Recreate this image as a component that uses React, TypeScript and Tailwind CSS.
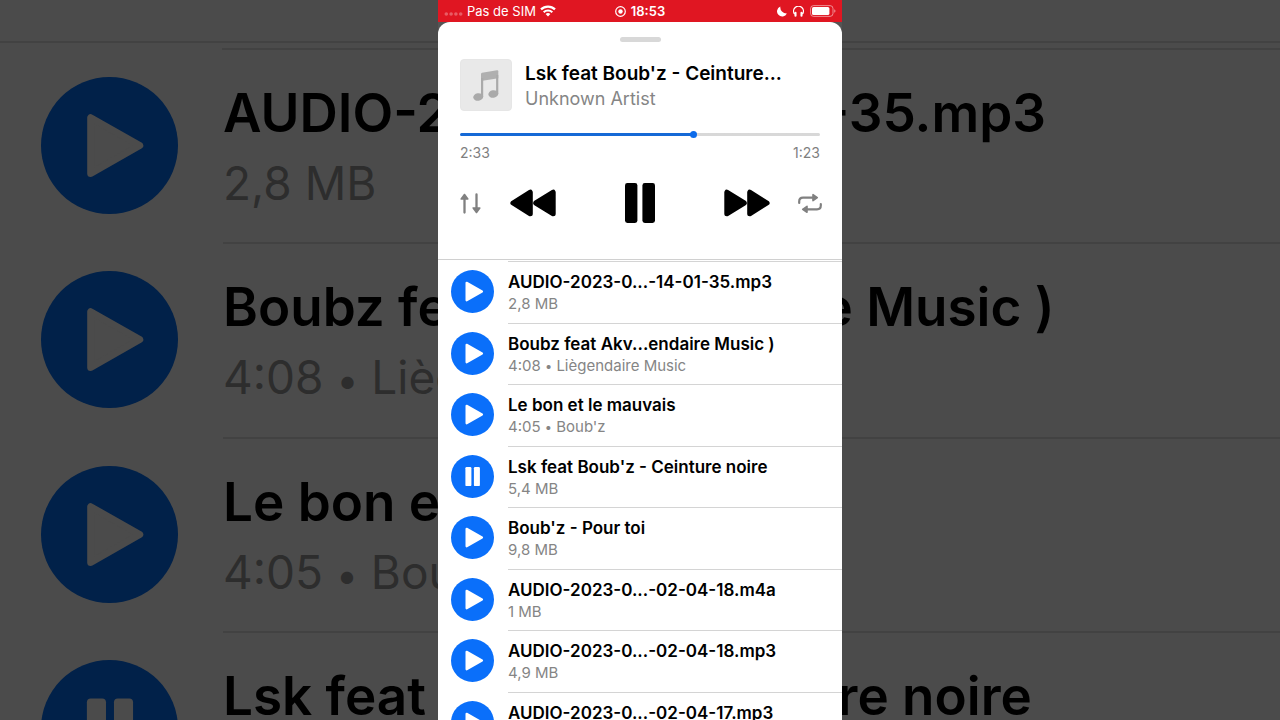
import React, { useState } from "react";

type Track = { title: string; detail: string; artist?: string };

const tracks: Track[] = [
  { title: "AUDIO-2023-0...-14-01-35.mp3", detail: "2,8 MB" },
  { title: "Boubz feat Akv...endaire Music )", detail: "4:08", artist: "Liègendaire Music" },
  { title: "Le bon et le mauvais", detail: "4:05", artist: "Boub'z" },
  { title: "Lsk feat Boub'z - Ceinture noire", detail: "5,4 MB" },
  { title: "Boub'z - Pour toi", detail: "9,8 MB" },
  { title: "AUDIO-2023-0...-02-04-18.m4a", detail: "1 MB" },
  { title: "AUDIO-2023-0...-02-04-18.mp3", detail: "4,9 MB" },
  { title: "AUDIO-2023-0...-02-04-17.mp3", detail: "4,9 MB" },
];

function Detail({ track }: { track: Track }) {
  return (
    <>
      {track.detail}
      {track.artist && (
        <>
          {" "}
          <span className="text-[0.85em]">•</span> {track.artist}
        </>
      )}
    </>
  );
}

function PlayDisc({ playing, className }: { playing: boolean; className: string }) {
  return (
    <svg viewBox="0 0 43 43" className={className} aria-hidden="true">
      <circle cx="21.5" cy="21.5" r="21.5" fill="currentColor" />
      {playing ? (
        <g className="fill-(--glyph)">
          <rect x="14.4" y="12.1" width="6" height="19" rx="1.2" />
          <rect x="22.9" y="12.1" width="6" height="19" rx="1.2" />
        </g>
      ) : (
        <path
          className="fill-(--glyph) stroke-(--glyph)"
          d="M15.6 12.8V30.3L31 21.5Z"
          strokeWidth="2.2"
          strokeLinejoin="round"
        />
      )}
    </svg>
  );
}

function Backdrop() {
  return (
    <div
      aria-hidden="true"
      className="absolute inset-0 overflow-hidden bg-[#4b4b4b] [--glyph:#4b4b4b]"
    >
      <div className="h-[43px] border-b-2 border-[#424242]" />
      <div className="mt-[5px] ml-[222px] border-t-2 border-[#424242]" />
      <ul>
        {tracks.slice(0, 4).map((t, i) => (
          <li key={t.title} className="flex gap-[45px] pl-[41px] odd:h-[194px] even:h-[195px]">
            <PlayDisc playing={i === 3} className="mt-[27px] size-[137px] shrink-0 text-[#012149]" />
            <div className="min-w-0 grow border-b-2 border-[#424242] pt-[31px] whitespace-nowrap">
              <p className="text-[53px] leading-[64px] font-semibold text-black">{t.title}</p>
              <p className="mt-[10px] text-[46px] leading-[56px] text-[#2d2d2d]">
                <Detail track={t} />
              </p>
            </div>
          </li>
        ))}
      </ul>
    </div>
  );
}

function StatusBar() {
  return (
    <div className="grid h-[22px] shrink-0 grid-cols-3 items-center bg-[#e01622] px-[6px] text-[13px] leading-[22px] text-white">
      <div className="flex items-center gap-[4px] whitespace-nowrap">
        <svg viewBox="0 0 19 4" className="mt-[6px] h-[4px] w-[19px] fill-white/30" aria-hidden="true">
          <circle cx="2.3" cy="2" r="1.8" />
          <circle cx="7.1" cy="2" r="1.8" />
          <circle cx="11.9" cy="2" r="1.8" />
          <circle cx="16.7" cy="2" r="1.8" />
        </svg>
        <span>Pas de SIM</span>
        <svg viewBox="0 0 16 12" className="h-[12px] w-[16px]" fill="none" stroke="white" aria-label="Wi-Fi">
          <path d="M1 4.4a10 10 0 0 1 14 0" strokeWidth="2.2" />
          <path d="M3.7 7.2a6.1 6.1 0 0 1 8.6 0" strokeWidth="2.1" />
          <path d="M8 11.6 5.6 9.1a3.4 3.4 0 0 1 4.8 0Z" fill="white" stroke="none" />
        </svg>
      </div>
      <div className="flex items-center justify-center gap-[5px] font-semibold">
        <svg viewBox="0 0 11 11" className="size-[11px]" aria-hidden="true">
          <circle cx="5.5" cy="5.5" r="4.8" fill="none" stroke="white" strokeWidth="1.2" />
          <circle cx="5.5" cy="5.5" r="2.2" fill="white" />
        </svg>
        <span>18:53</span>
      </div>
      <div className="flex items-center justify-end gap-[6px]">
        <svg viewBox="0 0 11 11" className="size-[11px] fill-white" aria-label="Ne pas déranger">
          <path d="M4.3.5A5.2 5.2 0 1 0 10.9 7.600 6.400 6.400 0 0 1 4.3.5Z" />
        </svg>
        <svg viewBox="0 0 11 11" className="size-[11px]" fill="none" stroke="white" aria-label="Casque">
          <path d="M1.7 8.200A4.900 4.900 0 1 1 9.300 8.200" strokeWidth="1.3" />
          <path d="M2.5 6.800v3M8.500 6.800v3" strokeWidth="2.1" strokeLinecap="round" />
        </svg>
        <svg viewBox="0 0 26 12" className="h-[12px] w-[26px]" aria-label="Batterie">
          <rect x=".6" y=".6" width="22.4" height="10.8" rx="3" fill="none" stroke="white" strokeOpacity=".5" />
          <rect x="2" y="2" width="17.4" height="8" rx="1.6" fill="white" />
          <path d="M24.2 4.2q1.3.5 1.3 1.8t-1.3 1.8Z" fill="white" fillOpacity=".5" />
        </svg>
      </div>
    </div>
  );
}

function Artwork() {
  return (
    <div className="flex size-[52px] shrink-0 items-center justify-center rounded-[4px] border border-[#e6e6e6] bg-[#e9e9e9]">
      <svg viewBox="0 0 26 31" className="h-[31px] w-[26px]" aria-hidden="true">
        <path d="M8 4Q8 3 9 2.800L24 .3Q25.300.1 25.300 1.200V8.200L8 11Z" fill="#b0b0b0" />
        <path d="M9.100 8V27M24.200 5V24" stroke="#aaa" strokeWidth="2.2" />
        <ellipse cx="5.2" cy="27" rx="5" ry="3.8" fill="#aaa" transform="rotate(-10 5.2 27)" />
        <ellipse cx="20.3" cy="24" rx="5" ry="3.8" fill="#aaa" transform="rotate(-10 20.3 24)" />
      </svg>
    </div>
  );
}

function Player() {
  const [position, setPosition] = useState(154);
  return (
    <section className="flex shrink-0 flex-col rounded-t-[12px] border-b border-[#d0d0d0] bg-white px-[22px] pt-[15px] pb-[36px]">
      <div className="h-[5px] w-[41px] shrink-0 self-center rounded-full bg-[#d8d8d8]" />
      <div className="mt-[17px] flex items-center gap-[13px]">
        <Artwork />
        <div className="min-w-0 pt-[2px] whitespace-nowrap">
          <h1 className="text-[19px] leading-[25px] font-semibold text-black">Lsk feat Boub'z - Ceinture...</h1>
          <p className="text-[18px] leading-[25px] text-[#858585]">Unknown Artist</p>
        </div>
      </div>
      <input
        type="range"
        aria-label="Position de lecture"
        min={0}
        max={236}
        value={position}
        onChange={(e) => setPosition(Number(e.target.value))}
        className="mt-[22px] h-[3px] w-full shrink-0 appearance-none rounded-full bg-[#d8d8d8] bg-linear-to-r from-[#1569d6] from-65% to-[#d8d8d8] to-65% [&::-webkit-slider-thumb]:size-[7px] [&::-webkit-slider-thumb]:appearance-none [&::-webkit-slider-thumb]:rounded-full [&::-webkit-slider-thumb]:bg-[#0d6bea]"
      />
      <div className="mt-[8px] flex justify-between text-[14px] leading-[18px] text-[#7f7f7f]">
        <span>2:33</span>
        <span>1:23</span>
      </div>
      <div className="-mx-[2px] mt-[21px] flex items-center justify-between">
        <div className="flex items-center gap-[28px]">
          <button type="button" aria-label="Ordre de lecture">
            <svg viewBox="-2 0 24 21" className="h-[21px] w-[24px]" fill="#808080" stroke="#808080" strokeLinejoin="round">
              <path d="M4.500 19.500V5M16.500 1.500V16" strokeWidth="2.3" strokeLinecap="round" />
              <path d="M4.500 1.500 1.200 6H7.800ZM16.500 19.500 13.200 15H19.800Z" strokeWidth="1.6" />
            </svg>
          </button>
          <button type="button" aria-label="Précédent">
            <svg viewBox="0 0 46 28" className="h-[28px] w-[46px]" stroke="black" strokeWidth="5" strokeLinejoin="round">
              <path d="M2.900 14 20.300 3.200V24.800ZM25.700 14 43.200 3.200V24.800Z" />
            </svg>
          </button>
        </div>
        <button type="button" aria-label="Pause">
          <svg viewBox="0 0 30 40" className="h-[40px] w-[30px]">
            <rect x="0" y="0" width="12.4" height="40" rx="2.4" />
            <rect x="17.4" y="0" width="12.6" height="40" rx="2.4" />
          </svg>
        </button>
        <div className="flex items-center gap-[28px]">
          <button type="button" aria-label="Suivant">
            <svg viewBox="0 0 46 28" className="h-[28px] w-[46px]" stroke="black" strokeWidth="5" strokeLinejoin="round">
              <path d="M43.100 14 25.700 3.200V24.800ZM20.300 14 2.800 3.200V24.800Z" />
            </svg>
          </button>
          <button type="button" aria-label="Répéter">
            <svg viewBox="0 0 24 21" className="h-[21px] w-[24px]" fill="none" stroke="#808080" strokeLinejoin="round">
              <path d="M1.200 10V8.500Q1.200 4.700 5 4.700H16M22.800 11v1.500Q22.800 16.300 19 16.300H8" strokeWidth="2.2" strokeLinecap="round" />
              <path d="M15 1.700V7.700L19.300 4.700ZM9 13.300V19.300L4.700 16.300Z" fill="#808080" strokeWidth="1.6" />
            </svg>
          </button>
        </div>
      </div>
    </section>
  );
}

function TrackList() {
  return (
    <section className="grow bg-white pt-px [--glyph:white]">
      <div className="ml-[70px] border-t border-[#d4d4d4]" />
      <ul>
        {tracks.map((t, i) => (
          <li key={t.title} className="flex gap-[14px] pl-[13px] odd:h-[62px] even:h-[61px]">
            <button
              type="button"
              aria-label={(i === 3 ? "Pause " : "Lire ") + t.title}
              className="mt-[8px] size-[43px] shrink-0"
            >
              <PlayDisc playing={i === 3} className="size-[43px] text-[#0a6ffa]" />
            </button>
            <div className="min-w-0 grow border-b border-[#d4d4d4] pt-[9px] whitespace-nowrap">
              <p className="text-[17px] leading-[22px] font-semibold text-black">{t.title}</p>
              <p className="text-[15px] leading-[22px] text-[#858585]">
                <Detail track={t} />
              </p>
            </div>
          </li>
        ))}
      </ul>
    </section>
  );
}

export default function App() {
  return (
    <div className="relative flex h-screen justify-center overflow-hidden font-['Inter','Liberation_Sans',sans-serif]">
      <Backdrop />
      <main className="relative flex w-full max-w-[404px] flex-col bg-[#555]">
        <StatusBar />
        <Player />
        <TrackList />
      </main>
    </div>
  );
}
